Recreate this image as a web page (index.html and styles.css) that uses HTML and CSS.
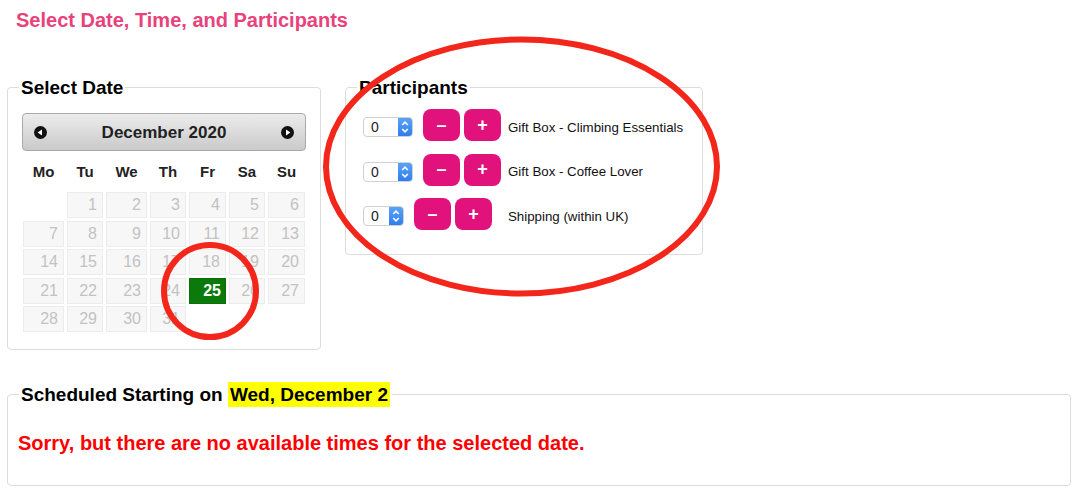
FILE: index.html
```html
<!DOCTYPE html>
<html>
<head>
<meta charset="utf-8">
<link rel="stylesheet" href="styles.css">
</head>
<body>
<div class="page">
  <h1 class="title">Select Date, Time, and Participants</h1>
  <div class="top-row">
    <fieldset class="box date-box">
      <legend>Select Date</legend>
      <div class="cal-head">
        <span class="nav"><svg width="13" height="13" viewBox="0 0 13 13"><circle cx="6.5" cy="6.5" r="6.5" fill="#111"/><path d="M3.6 6.5 L8 3.6 V9.4 Z" fill="#fff"/></svg></span>
        <span class="month">December 2020</span>
        <span class="nav"><svg width="13" height="13" viewBox="0 0 13 13"><circle cx="6.5" cy="6.5" r="6.5" fill="#111"/><path d="M9.4 6.5 L5 3.6 V9.4 Z" fill="#fff"/></svg></span>
      </div>
      <div class="cal-grid dows">
        <span>Mo</span><span>Tu</span><span>We</span><span>Th</span><span>Fr</span><span>Sa</span><span>Su</span>
      </div>
      <div class="cal-grid days">
        <span class="empty"></span><span class="day">1</span><span class="day">2</span><span class="day">3</span><span class="day">4</span><span class="day">5</span><span class="day">6</span>
        <span class="day">7</span><span class="day">8</span><span class="day">9</span><span class="day">10</span><span class="day">11</span><span class="day">12</span><span class="day">13</span>
        <span class="day">14</span><span class="day">15</span><span class="day">16</span><span class="day">17</span><span class="day">18</span><span class="day">19</span><span class="day">20</span>
        <span class="day">21</span><span class="day">22</span><span class="day">23</span><span class="day">24</span><span class="day selected">25</span><span class="day">26</span><span class="day">27</span>
        <span class="day">28</span><span class="day">29</span><span class="day">30</span><span class="day">31</span><span class="empty"></span><span class="empty"></span><span class="empty"></span>
      </div>
    </fieldset>

    <fieldset class="box part-box">
      <legend>Participants</legend>
      <div class="prow">
        <div class="controls">
          <span class="qty"><span class="qv">0</span><span class="step"><svg width="8" height="14" viewBox="0 0 8 14"><path d="M1.2 5 L4 2.2 L6.8 5 M1.2 9 L4 11.8 L6.8 9" fill="none" stroke="#fff" stroke-width="1.6"/></svg></span></span>
          <span class="btn">&#8211;</span><span class="btn">+</span>
        </div>
        <span class="plabel">Gift Box - Climbing Essentials</span>
      </div>
      <div class="prow">
        <div class="controls">
          <span class="qty"><span class="qv">0</span><span class="step"><svg width="8" height="14" viewBox="0 0 8 14"><path d="M1.2 5 L4 2.2 L6.8 5 M1.2 9 L4 11.8 L6.8 9" fill="none" stroke="#fff" stroke-width="1.6"/></svg></span></span>
          <span class="btn">&#8211;</span><span class="btn">+</span>
        </div>
        <span class="plabel">Gift Box - Coffee Lover</span>
      </div>
      <div class="prow">
        <div class="controls">
          <span class="qty narrow"><span class="qv">0</span><span class="step"><svg width="8" height="14" viewBox="0 0 8 14"><path d="M1.2 5 L4 2.2 L6.8 5 M1.2 9 L4 11.8 L6.8 9" fill="none" stroke="#fff" stroke-width="1.6"/></svg></span></span>
          <span class="btn">&#8211;</span><span class="btn">+</span>
        </div>
        <span class="plabel">Shipping (within UK)</span>
      </div>
    </fieldset>
  </div>

  <fieldset class="box sched-box">
    <legend>Scheduled Starting on <mark class="hl">Wed, December 2</mark></legend>
    <p class="sorry">Sorry, but there are no available times for the selected date.</p>
  </fieldset>

  <svg class="annot" width="1079" height="494" viewBox="0 0 1079 494">
    <ellipse cx="521.5" cy="166.5" rx="195.5" ry="127" fill="none" stroke="#f2261a" stroke-width="6"/>
    <circle cx="210" cy="291" r="46" fill="none" stroke="#f2261a" stroke-width="6"/>
  </svg>
</div>
</body>
</html>
```

FILE: styles.css
```css
* { box-sizing: border-box; }
html, body {
  margin: 0;
  padding: 0;
  background: #fff;
}
body {
  font-family: "Liberation Sans", Arial, Helvetica, sans-serif;
  color: #000;
  width: 1079px;
  height: 494px;
  overflow: hidden;
}
.page {
  position: relative;
  padding: 9px 8px 0 7px;
}
.title {
  margin: 0 0 0 9px;
  font-size: 20px;
  line-height: 23px;
  font-weight: bold;
  color: #e8427c;
}
.top-row {
  display: flex;
  align-items: flex-start;
  gap: 24px;
  margin-top: 45px;
}
.box {
  margin: 0;
  border: 1px solid #dcdcdc;
  border-radius: 4px;
  min-width: 0;
}
.box > legend {
  font-size: 19px;
  line-height: 21px;
  font-weight: bold;
  padding: 0 2px;
  margin-left: 0;
}
.date-box {
  width: 314px;
  height: 273px;
  padding: 14px 14px 0 14px;
}
.date-box > legend { margin-left: -3px; }
.cal-head {
  height: 38px;
  margin-top: 1px;
  display: flex;
  align-items: center;
  justify-content: space-between;
  padding: 0 11px 0 11px;
  border: 1px solid #a9a9a9;
  border-radius: 4px;
  background: linear-gradient(#ececec, #cacaca);
}
.nav { display: flex; }
.month {
  font-size: 17px;
  font-weight: bold;
  color: #222;
  margin-top: 1px;
}
.cal-grid {
  display: grid;
  grid-template-columns: 41px 36px 41px 36px 37px 36px 37px;
  column-gap: 3px;
  margin: 0 1px;
}
.dows {
  height: 41px;
  align-items: center;
}
.dows span {
  text-align: center;
  font-size: 15px;
  font-weight: bold;
  color: #222;
}
.days {
  grid-auto-rows: 26px;
  row-gap: 2.5px;
}
.day {
  background: #f7f7f7;
  border: 1px solid #ececec;
  color: #c2c2c2;
  font-size: 16px;
  line-height: 24px;
  text-align: right;
  padding-right: 5px;
}
.day.selected {
  background: #0b7a0b;
  border-color: #0b6f0b;
  color: #fff;
  font-weight: bold;
  padding-right: 4px;
}
.part-box {
  width: 358px;
  height: 178px;
  padding: 11px 17px 0 17px;
}
.part-box > legend { margin-left: -6px; }
.prow {
  display: grid;
  grid-template-columns: 145px auto;
  align-items: center;
  height: 32px;
  margin-bottom: 12.5px;
}
.controls {
  display: flex;
  align-items: center;
}
.qty {
  display: flex;
  width: 50px;
  height: 20px;
  border: 1px solid #d0d0d0;
  border-radius: 4px;
  background: #fff;
  margin-right: 10px;
  overflow: hidden;
  margin-top: 4px;
}
.qty.narrow { width: 41px; }
.qv {
  flex: 1;
  font-size: 14px;
  line-height: 18px;
  padding-left: 7px;
  color: #222;
}
.step {
  width: 14px;
  display: flex;
  align-items: center;
  justify-content: center;
  background: linear-gradient(#5aa2f8, #2f7ef0);
}
.btn {
  width: 37px;
  height: 32px;
  margin-right: 4px;
  border-radius: 8px;
  background: #e2127d;
  color: #fff;
  font-size: 18px;
  font-weight: bold;
  display: flex;
  align-items: center;
  justify-content: center;
}
.plabel {
  font-size: 13.3px;
  color: #111;
  margin-top: 4px;
  white-space: nowrap;
}
.sched-box {
  width: 1064px;
  height: 102px;
  margin-top: 34px;
  padding: 0 10px 0 10px;
}
.sched-box > legend { margin-left: 1px; }
.hl {
  background: #ffff00;
  color: #000;
  padding: 2px 2px;
}
.sorry {
  margin: 27px 0 0 0;
  font-size: 20px;
  font-weight: bold;
  color: #ff0000;
}
.annot {
  position: absolute;
  left: 0;
  top: 0;
  pointer-events: none;
}
```
